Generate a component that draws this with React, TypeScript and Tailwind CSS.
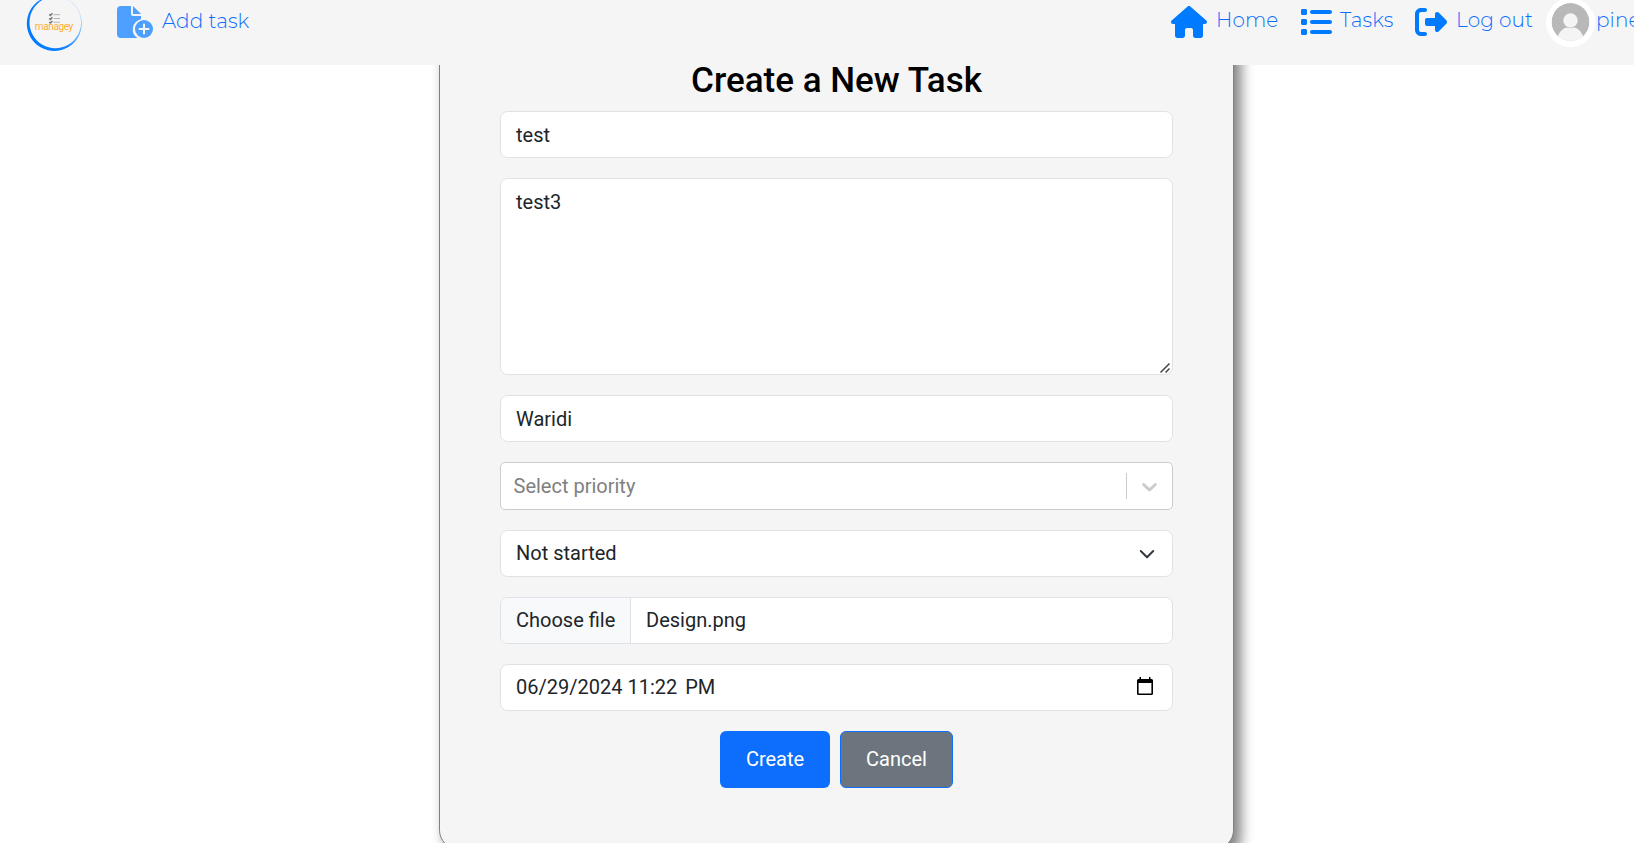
import type { ReactNode } from "react";
import { FaHouse, FaList, FaRightFromBracket } from "react-icons/fa6";

const control =
  "w-full h-[47px] rounded-[7.5px] border border-[#dee2e6] bg-white px-[15px] flex items-center";

function NavItem({ icon, label, className }: { icon: ReactNode; label: string; className: string }) {
  return (
    <a className={`flex items-start shrink-0 text-[#007bff] ${className}`}>
      {icon}
      <span className="whitespace-nowrap leading-[30px] text-[#0d6efd]">{label}</span>
    </a>
  );
}

function Logo() {
  return (
    <svg className="shrink-0" width="58" height="53" viewBox="0 0 58 53">
      <defs>
        <linearGradient id="ring" x1="0" y1="0.7" x2="1" y2="0.3">
          <stop offset="0" stopColor="#0078ff" />
          <stop offset="0.55" stopColor="#1485ff" />
          <stop offset="1" stopColor="#a5d1ff" />
        </linearGradient>
      </defs>
      <path
        fill="url(#ring)"
        fillRule="evenodd"
        d="M28.300 -4a27.500 27.500 0 1 0 .01 0zM29.300 -3.400a25.800 25.800 0 1 1-.01 0z"
      />
      <g stroke="#777" strokeWidth="1.5" fill="none">
        <path d="M23.200 14.500l1.200 1 2-2.200M23.200 18.500l1.200 1 2-2.200M23.200 22l1.200 1 2-2" />
        <path stroke="#b4b4b4" strokeWidth="1" d="M27.500 14.700h6.500M27.500 18.500h6.500M27.500 22.200h6.500" />
      </g>
      <text
        x="8.800"
        y="30.200"
        textLength="38.500"
        fontSize="10"
        fontWeight="400"
        letterSpacing="0"
        fill="#ffae2e"
        fontFamily="Roboto, sans-serif"
      >
        managey
      </text>
    </svg>
  );
}

function AddFileIcon() {
  return (
    <svg width="37" height="32" viewBox="0 0 37 32" className="mt-[6px] mr-[8px] shrink-0">
      <path
        fill="#4da0ff"
        d="M4 0H14V8a2 2 0 0 0 2 2H24V13.400A10.200 10.200 0 0 0 20.500 32H4a4 4 0 0 1-4-4V4a4 4 0 0 1 4-4z"
      />
      <path fill="#4da0ff" d="M16 0l8 8h-8z" />
      <circle cx="27" cy="23" r="10.2" fill="#f5f5f5" />
      <circle cx="27" cy="23" r="9" fill="#4da0ff" />
      <path d="M27 18.500v9M22.500 23h9" stroke="#f5f5f5" strokeWidth="2" strokeLinecap="round" />
    </svg>
  );
}

function Avatar() {
  return (
    <svg width="49" height="49" viewBox="0 0 49 49" className="-mt-[2px] shrink-0">
      <defs>
        <clipPath id="face">
          <circle cx="24.5" cy="24" r="19" />
        </clipPath>
      </defs>
      <circle cx="24.5" cy="24.5" r="24.5" fill="#fff" />
      <g clipPath="url(#face)">
        <circle cx="24.5" cy="24" r="19" fill="#b8b8b8" />
        <circle cx="24.5" cy="22.5" r="7.2" fill="#f4f4f4" />
        <path d="M12 38c2-5 6-8.500 9-8.500q3.500 1.500 7 0c3 0 7 3.500 9 8.500v8H12z" fill="#f4f4f4" />
      </g>
    </svg>
  );
}

export default function App() {
  return (
    <div className="flex h-[843px] w-[1634px] flex-col overflow-hidden bg-white font-['Roboto',sans-serif] text-[20px] leading-[30px] text-[#212529]">
      <header className="relative z-10 flex h-[65px] shrink-0 items-start overflow-hidden bg-[#f5f5f5] font-['Montserrat','Inter',sans-serif] font-light tracking-[0.1px]">
        <div className="ml-[26px] w-[91px] shrink-0">
          <Logo />
        </div>
        <NavItem className="[&>span]:pt-[6px]" icon={<AddFileIcon />} label="Add task" />
        <nav className="ml-auto flex w-[464px] shrink-0 items-start">
          <NavItem
            className="w-[129px] [&>span]:pt-[5px]"
            icon={<FaHouse className="mt-[6px] ml-px mr-[9px] h-[32px] w-[36px] shrink-0" />}
            label="Home"
          />
          <NavItem
            className="w-[115px] [&>span]:pt-[5px]"
            icon={<FaList className="mt-[6px] ml-px mr-[8px] h-[32px] w-[32px] shrink-0" />}
            label="Tasks"
          />
          <NavItem
            className="w-[132px] [&>span]:pt-[5px]"
            icon={<FaRightFromBracket className="mt-[6px] ml-px mr-[9px] h-[32px] w-[32px] shrink-0" />}
            label="Log out"
          />
          <NavItem
            className="[&>span]:pt-[5px] [&>span]:pl-px"
            icon={<Avatar />}
            label="pineapple"
          />
        </nav>
      </header>

      <main className="ml-[439px] w-[795px] shrink-0">
        <form className="-mt-[50px] rounded-[18.75px] border border-[#808080] bg-[#f5f5f5] px-[60px] pt-[44px] pb-[60px] shadow-[6.25px_6.25px_12.5px_#808080]">
          <h1 className="mb-[9px] text-center text-[35px] font-medium leading-[42px] text-black">
            Create a New Task
          </h1>
          <div className="flex flex-col gap-[20px]">
            <div className={control}>test</div>
            <div className="flex h-[197px] w-full items-start justify-between rounded-[7.5px] border border-[#dee2e6] bg-white pl-[15px]">
              <span className="pt-[8px]">test3</span>
              <svg width="10" height="10" viewBox="0 0 10 10" className="mr-[2px] mb-[1px] self-end">
                <path d="M0.500 9.500L9.500 0.500M5.500 9.500L9.500 5.500" stroke="#444" strokeWidth="1.5" />
              </svg>
            </div>
            <div className={control}>Waridi</div>
            <div className="flex h-[48px] w-full items-center rounded-[5px] border border-[#ccc] bg-white pl-[12.5px] text-[#808080]">
              <span className="grow">Select priority</span>
              <span className="h-[26px] w-px bg-[#ccc]" />
              <svg width="25" height="25" viewBox="0 0 20 20" className="mr-[10px] ml-[10px]" fill="#ccc">
                <path d="M4.516 7.548c0.436-0.446 1.043-0.481 1.576 0l3.908 3.747 3.908-3.747c0.533-0.481 1.141-0.446 1.574 0 0.436 0.445 0.408 1.197 0 1.615-0.406 0.418-4.695 4.502-4.695 4.502-0.217 0.223-0.502 0.335-0.787 0.335s-0.570-0.112-0.789-0.335c0 0-4.287-4.084-4.695-4.502s-0.436-1.170 0-1.615z" />
              </svg>
            </div>
            <div className={`${control} justify-between pb-px`}>
              <span>Not started</span>
              <svg width="20" height="15" viewBox="0 0 16 12" fill="none">
                <path
                  d="m3 4 5 5 5-5"
                  stroke="#343a40"
                  strokeWidth="1.600"
                  strokeLinecap="round"
                  strokeLinejoin="round"
                />
              </svg>
            </div>
            <div className="flex h-[47px] w-full items-stretch overflow-hidden rounded-[7.5px] border border-[#dee2e6] bg-white">
              <div className="flex w-[130px] items-center border-r border-[#dee2e6] bg-[#f8f9fa] pb-px pl-[15px]">
                Choose file
              </div>
              <div className="flex items-center pb-px pl-[15px]">Design.png</div>
            </div>
            <div className={`${control} justify-between pb-px`}>
              <span className="flex">
                <span>06/29/2024</span>
                <span className="ml-[5px]">11:22</span>
                <span className="ml-[8px]">PM</span>
              </span>
              <svg width="16" height="19" viewBox="0 0 16 19" className="mr-[4px] mb-[1px]">
                <path
                  fill="#000"
                  fillRule="evenodd"
                  d="M2.500 0h1.500v2h8V0h1.500v2H14.500A1.500 1.500 0 0 1 16 3.500v13A1.500 1.500 0 0 1 14.500 18h-13A1.500 1.500 0 0 1 0 16.500v-13A1.500 1.500 0 0 1 1.500 2h1zM1.600 6v10.400h12.800V6z"
                />
              </svg>
            </div>
            <div className="flex justify-center gap-[10px] text-white">
              <button className="h-[57px] w-[110px] rounded-[6px] bg-[#0d6efd] pb-[2px]">Create</button>
              <button className="h-[57px] w-[113px] rounded-[6px] border border-[#0d6efd] bg-[#6c757d] pb-[2px]">
                Cancel
              </button>
            </div>
          </div>
        </form>
      </main>
    </div>
  );
}
